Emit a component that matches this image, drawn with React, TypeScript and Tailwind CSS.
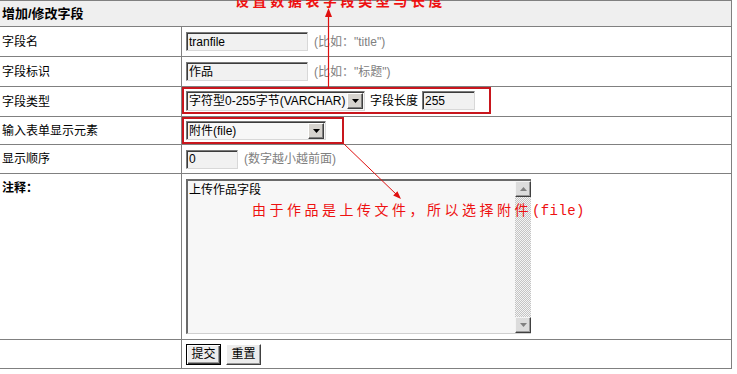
import React from "react";

const FONT = "font-['Liberation_Sans','Noto_Sans_CJK_SC',sans-serif]";

function TextBox({ value, w }: { value: string; w: string }) {
  return (
    <div
      className={`${w} h-[19px] bg-[#f1f1f1] border border-t-[#7a7a7a] border-l-[#7a7a7a] border-b-[#d8d8d8] border-r-[#d8d8d8] shadow-[inset_1px_1px_0_#3c3c3c] pl-[2px] flex items-center leading-[14px] text-[12px] text-black`}
    >
      {value}
    </div>
  );
}

function DropBtn() {
  return (
    <div className="w-[16px] h-[16px] bg-[#d6d3ce] border border-t-[#ffffff] border-l-[#ffffff] border-b-[#404040] border-r-[#404040] shadow-[inset_-1px_-1px_0_#808080] flex items-center justify-center">
      <svg width="7" height="4" viewBox="0 0 7 4">
        <polygon points="0,0 7,0 3.5,4" fill="#000" />
      </svg>
    </div>
  );
}

function Select({ value, w, h }: { value: string; w: string; h: string }) {
  return (
    <div
      className={`${w} ${h} bg-[#f7f7f7] border border-t-[#7a7a7a] border-l-[#7a7a7a] border-b-[#d8d8d8] border-r-[#d8d8d8] shadow-[inset_1px_1px_0_#3c3c3c] flex items-center justify-between pl-[2px] pr-[1px]`}
    >
      <span className="text-[12px] leading-[14px] text-black whitespace-nowrap">{value}</span>
      <DropBtn />
    </div>
  );
}

function ScrollBtn({ up }: { up?: boolean }) {
  return (
    <div className="w-[16px] h-[16px] bg-[#dcdcdc] border border-t-[#f4f4f4] border-l-[#f4f4f4] border-b-[#404040] border-r-[#404040] shadow-[inset_-1px_-1px_0_#9a9a9a] flex items-center justify-center shrink-0">
      <svg width="7" height="4" viewBox="0 0 7 4">
        {up ? (
          <polygon points="0,4 7,4 3.5,0" fill="#808080" />
        ) : (
          <polygon points="0,0 7,0 3.5,4" fill="#808080" />
        )}
      </svg>
    </div>
  );
}

function Hint({ children }: { children: React.ReactNode }) {
  return <span className="text-[12px] leading-[14px] text-[#808080] ml-[6px] whitespace-nowrap">{children}</span>;
}

export default function App() {
  return (
    <div className={`relative w-[737px] h-[374px] bg-white overflow-hidden text-[12px] leading-[14px] text-black ${FONT}`}>
      <div className="w-[732px] border-r border-[#808080]">
        {/* header */}
        <div className="h-[27px] border-y border-[#808080] bg-[#efefef] flex items-center pl-[2px] font-bold text-[13px]">
          增加/修改字段
        </div>

        {/* row 1 */}
        <div className="h-[30px] flex border-b border-[#808080]">
          <div className="w-[182px] shrink-0 border-r border-[#808080] flex items-center pl-[2px]">字段名</div>
          <div className="flex-1 flex items-center pl-1">
            <TextBox value="tranfile" w="w-[122px]" />
            <Hint>(比如："title")</Hint>
          </div>
        </div>

        {/* row 2 */}
        <div className="h-[30px] flex border-b border-[#808080]">
          <div className="w-[182px] shrink-0 border-r border-[#808080] flex items-center pl-[2px]">字段标识</div>
          <div className="flex-1 flex items-center pl-1">
            <TextBox value="作品" w="w-[122px]" />
            <Hint>(比如："标题")</Hint>
          </div>
        </div>

        {/* row 3 */}
        <div className="h-[30px] flex border-b border-[#808080]">
          <div className="w-[182px] shrink-0 border-r border-[#808080] flex items-center pl-[2px]">字段类型</div>
          <div className="flex-1 flex items-start">
            <div className="w-[309px] h-[27px] border-2 border-[#c8161d] flex items-center pl-[2px]">
              <Select value="字符型0-255字节(VARCHAR)" w="w-[179px]" h="h-[20px]" />
              <span className="ml-[5px] whitespace-nowrap">字段长度</span>
              <div className="ml-[4px]">
                <TextBox value="255" w="w-[53px]" />
              </div>
            </div>
          </div>
        </div>

        {/* row 4 */}
        <div className="h-[28px] flex border-b border-[#808080]">
          <div className="w-[182px] shrink-0 border-r border-[#808080] flex items-center pl-[2px]">输入表单显示元素</div>
          <div className="flex-1 flex items-start">
            <div className="w-[162px] h-[27px] border-2 border-[#c8161d] flex items-center pl-[2px]">
              <Select value="附件(file)" w="w-[140px]" h="h-[19px]" />
            </div>
          </div>
        </div>

        {/* row 5 */}
        <div className="h-[29px] flex border-b border-[#808080]">
          <div className="w-[182px] shrink-0 border-r border-[#808080] flex items-center pl-[2px]">显示顺序</div>
          <div className="flex-1 flex items-center pl-1">
            <div className="h-[20px] flex items-center">
              <TextBox value="0" w="w-[52px]" />
            </div>
            <Hint>(数字越小越前面)</Hint>
          </div>
        </div>

        {/* row 6 */}
        <div className="h-[166px] flex border-b border-[#808080]">
          <div className="w-[182px] shrink-0 border-r border-[#808080] pl-[2px] pt-[7px] font-semibold">注释：</div>
          <div className="flex-1 pl-1 pt-[5px]">
            <div className="w-[345px] h-[155px] flex bg-[#f7f7f7] border-t-2 border-l-2 border-t-[#6a6a6a] border-l-[#6a6a6a] border-b border-b-[#d0d0d0]">
              <div className="flex-1 pl-[1px] pt-[2px] text-[12px] leading-[14px]">上传作品字段</div>
              <div className="w-[16px] flex flex-col">
                <ScrollBtn up />
                <div className="flex-1 bg-[image:repeating-conic-gradient(#c4c4c4_0%_25%,#f4f4f4_0%_50%)] bg-[length:2px_2px]" />
                <ScrollBtn />
              </div>
            </div>
          </div>
        </div>

        {/* row 7 */}
        <div className="h-[29px] flex border-b border-[#808080]">
          <div className="w-[182px] shrink-0 border-r border-[#808080]" />
          <div className="flex-1 flex items-center pl-1 gap-[5px]">
            <button className="w-[35px] h-[21px] bg-[#ececec] border border-black shadow-[inset_1px_1px_0_#ffffff,inset_-1px_-1px_0_#404040,inset_-2px_-2px_0_#9a9a9a] text-[12px] leading-[14px] text-black flex items-center justify-center">
              提交
            </button>
            <button className="w-[35px] h-[21px] bg-[#ececec] border border-t-[#ffffff] border-l-[#ffffff] border-b-[#404040] border-r-[#404040] shadow-[inset_-1px_-1px_0_#9a9a9a] text-[12px] leading-[14px] text-black flex items-center justify-center">
              重置
            </button>
          </div>
        </div>
      </div>

      {/* annotations */}
      <svg className="absolute left-0 top-0 pointer-events-none" width="737" height="374">
        <line x1="328.5" y1="14" x2="328.5" y2="87" stroke="#e01010" strokeWidth="1.2" />
        <polygon points="328.5,8 325,17 332,17" fill="#e01010" />
        <line x1="343" y1="143" x2="397" y2="195" stroke="#e01010" strokeWidth="1" />
        <polygon points="401,199 393.2,195.6 397.4,191.3" fill="#e01010" />
      </svg>
      <div className="absolute left-[235px] top-[-7px] text-[14px] leading-[16px] tracking-[3.6px] font-bold text-[#ee1111] whitespace-nowrap">
        设置数据表字段类型与长度
      </div>
      <div className="absolute left-[252px] top-[202px] text-[14px] leading-[16px] tracking-[3.5px] text-[#ee1111] whitespace-nowrap">
        由于作品是上传文件，所以选择附件
        <span className="font-['Liberation_Mono',monospace] tracking-[0.4px]">(file)</span>
      </div>
    </div>
  );
}
